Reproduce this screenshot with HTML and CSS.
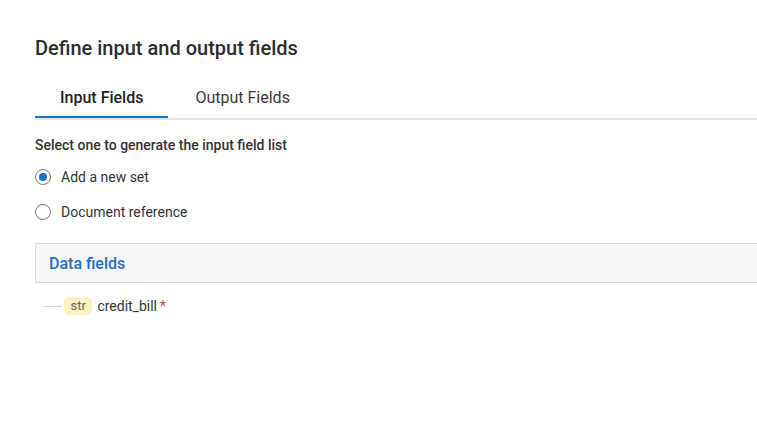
FILE: index.html
```html
<!DOCTYPE html>
<html>
<head>
<meta charset="utf-8">
<link rel="stylesheet" href="styles.css">
</head>
<body>
<div class="page">
  <h1 class="title">Define input and output fields</h1>
  <div class="tabs">
    <div class="tab active">Input Fields</div>
    <div class="tab">Output Fields</div>
  </div>
  <div class="section-label">Select one to generate the input field list</div>
  <div class="radios">
    <label class="radio"><span class="circle checked"></span><span>Add a new set</span></label>
    <label class="radio"><span class="circle"></span><span>Document reference</span></label>
  </div>
  <div class="panel-head">Data fields</div>
  <div class="tree-row">
    <span class="branch"></span>
    <span class="badge">str</span>
    <span class="field-name">credit_bill</span>
    <span class="req">*</span>
  </div>
</div>
</body>
</html>
```

FILE: styles.css
```css
html, body {
  margin: 0;
  padding: 0;
  background: #fff;
  overflow: hidden;
}
body {
  font-family: Roboto, "Liberation Sans", sans-serif;
  color: #333;
  width: 757px;
  height: 426px;
}
.page {
  padding: 36px 0 0 35px;
  margin-right: -40px;
}
.title {
  margin: 0;
  font-size: 20px;
  line-height: 24px;
  font-weight: 500;
  color: #2d2d2d;
}
.tabs {
  display: flex;
  margin-top: 16px;
  border-bottom: 2px solid #e6e6e6;
  gap: 2px;
}
.tab {
  padding: 12px 25px 8px;
  font-size: 16px;
  line-height: 20px;
  color: #3a3a3a;
  border-bottom: 2px solid transparent;
}
.tab.active {
  color: #222;
  font-weight: 500;
  border-bottom-color: #1a73c4;
}
.section-label {
  margin-top: 16px;
  font-size: 14px;
  line-height: 18px;
  font-weight: 500;
  color: #333;
}
.radios {
  display: flex;
  flex-direction: column;
  gap: 17px;
  margin-top: 14px;
}
.radio {
  display: flex;
  align-items: center;
  gap: 10px;
  font-size: 14px;
  line-height: 18px;
  color: #333;
}
.circle {
  width: 14px;
  height: 14px;
  border: 1px solid #777;
  border-radius: 50%;
  box-sizing: content-box;
  display: flex;
  align-items: center;
  justify-content: center;
}
.circle.checked::after {
  content: "";
  width: 8px;
  height: 8px;
  border-radius: 50%;
  background: #1a73c4;
}
.panel-head {
  margin-top: 22px;
  height: 38px;
  display: flex;
  align-items: center;
  padding-left: 13px;
  background: #f7f7f7;
  border: 1px solid #d9d9d9;
  font-size: 16px;
  font-weight: 500;
  color: #1f70c1;
}
.tree-row {
  display: flex;
  align-items: center;
  margin-top: 14px;
  padding-left: 8px;
  font-size: 14px;
}
.branch {
  width: 19px;
  height: 1px;
  background: #d6d6d6;
  margin-right: 2px;
}
.badge {
  background: #fdf1c0;
  color: #666;
  font-size: 13px;
  line-height: 18px;
  padding: 0 6.5px;
  border-radius: 5px;
  margin-right: 5px;
}
.field-name {
  color: #333;
}
.req {
  color: #e53935;
  margin-left: 3px;
}
```
